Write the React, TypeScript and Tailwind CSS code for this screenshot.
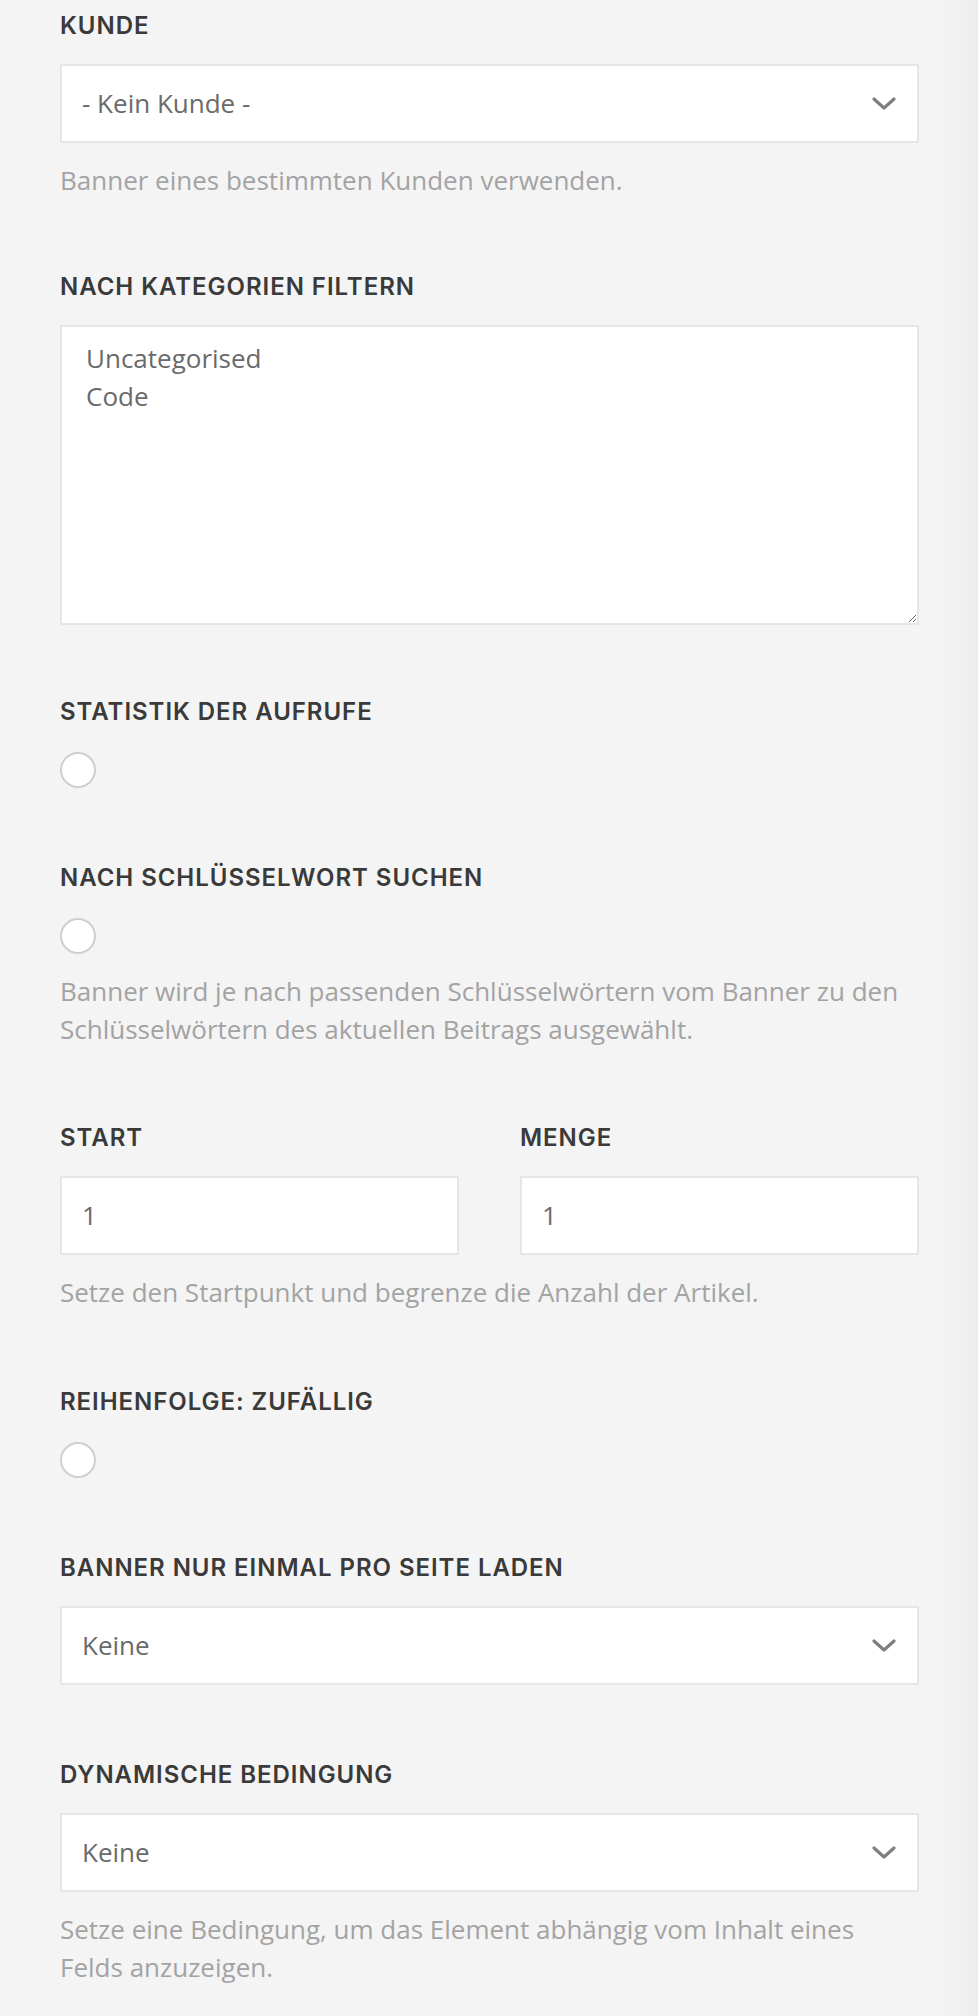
import type { ReactNode } from 'react';

const labelFont = { fontFamily: 'Inter, "Noto Sans", sans-serif' };
const bodyFont = { fontFamily: '"Open Sans", "Noto Sans", sans-serif' };

const Label = ({ children }: { children: ReactNode }) => (
  <div
    style={labelFont}
    className="h-[28px] leading-[28px] text-[24px] font-semibold uppercase tracking-[0.04em] text-[#3a3a3a] whitespace-nowrap"
  >
    {children}
  </div>
);

const Help = ({ children }: { children: ReactNode }) => (
  <p style={bodyFont} className="mt-[18px] text-[26px] leading-[38px] font-normal text-[#a3a3a3]">
    {children}
  </p>
);

const Chevron = () => (
  <svg className="w-[24px] h-[14px]" viewBox="0 0 24 14" fill="none">
    <polyline points="2,2 12,11 22,2" stroke="#808080" strokeWidth={3.2} strokeLinecap="round" strokeLinejoin="round" />
  </svg>
);

const Select = ({ value }: { value: string }) => (
  <div className="h-[79px] bg-white border-2 border-[#e6e6e6] flex items-center justify-between pl-[20px] pr-[21px]">
    <span style={bodyFont} className="text-[26px] font-normal text-[#6a6a6a]">
      {value}
    </span>
    <Chevron />
  </div>
);

const Radio = () => (
  <div className="pt-[2px]">
    <div className="w-[36px] h-[36px] rounded-full bg-white border-2 border-[#cfcfcf]" />
  </div>
);

const Field = ({
  label,
  children,
  help,
  space = 'mb-[76px]',
}: {
  label: string;
  children: ReactNode;
  help?: ReactNode;
  space?: string;
}) => (
  <div className={space}>
    <Label>{label}</Label>
    <div className="mt-[24px]">{children}</div>
    {help && <Help>{help}</Help>}
  </div>
);

export default function App() {
  return (
    <div className="min-h-[2016px] w-full flex bg-[#f4f4f4]">
      {/* Form column */}
      <main className="flex-1 pl-[60px] pr-[15px] pt-[12px] pb-[30px]">
        <Field space="mb-[74px]" label="Kunde" help="Banner eines bestimmten Kunden verwenden.">
          <Select value="- Kein Kunde -" />
        </Field>

        <Field space="mb-[73px]" label="Nach Kategorien filtern">
          <textarea
            readOnly
            style={bodyFont}
            value={'Uncategorised\nCode'}
            className="block w-full h-[300px] bg-white border-2 border-[#e6e6e6] px-[24px] py-[12px] text-[26px] leading-[38px] font-normal text-[#6a6a6a] outline-none"
          />
        </Field>

        <Field label="Statistik der Aufrufe">
          <Radio />
        </Field>

        <Field
          label="Nach Schlüsselwort suchen"
          help="Banner wird je nach passenden Schlüsselwörtern vom Banner zu den Schlüsselwörtern des aktuellen Beitrags ausgewählt."
        >
          <Radio />
        </Field>

        {/* Start / Menge */}
        <div className="mb-[77px]">
          <div className="grid grid-cols-2 gap-[61px]">
            <div>
              <Label>Start</Label>
              <div className="mt-[24px] h-[79px] bg-white border-2 border-[#e6e6e6] flex items-center pl-[20px]">
                <span style={bodyFont} className="text-[26px] font-normal text-[#6a6a6a]">1</span>
              </div>
            </div>
            <div>
              <Label>Menge</Label>
              <div className="mt-[24px] h-[79px] bg-white border-2 border-[#e6e6e6] flex items-center pl-[20px]">
                <span style={bodyFont} className="text-[26px] font-normal text-[#6a6a6a]">1</span>
              </div>
            </div>
          </div>
          <Help>Setze den Startpunkt und begrenze die Anzahl der Artikel.</Help>
        </div>

        <Field label="Reihenfolge: Zufällig">
          <Radio />
        </Field>

        <Field label="Banner nur einmal pro Seite laden">
          <Select value="Keine" />
        </Field>

        <Field
          space="mb-0"
          label="Dynamische Bedingung"
          help="Setze eine Bedingung, um das Element abhängig vom Inhalt eines Felds anzuzeigen."
        >
          <Select value="Keine" />
        </Field>
      </main>

      {/* Right edge */}
      <aside className="w-[44px] bg-gradient-to-r from-[#f4f4f4] via-[#f1f1f1] to-[#ececec]" />
    </div>
  );
}
